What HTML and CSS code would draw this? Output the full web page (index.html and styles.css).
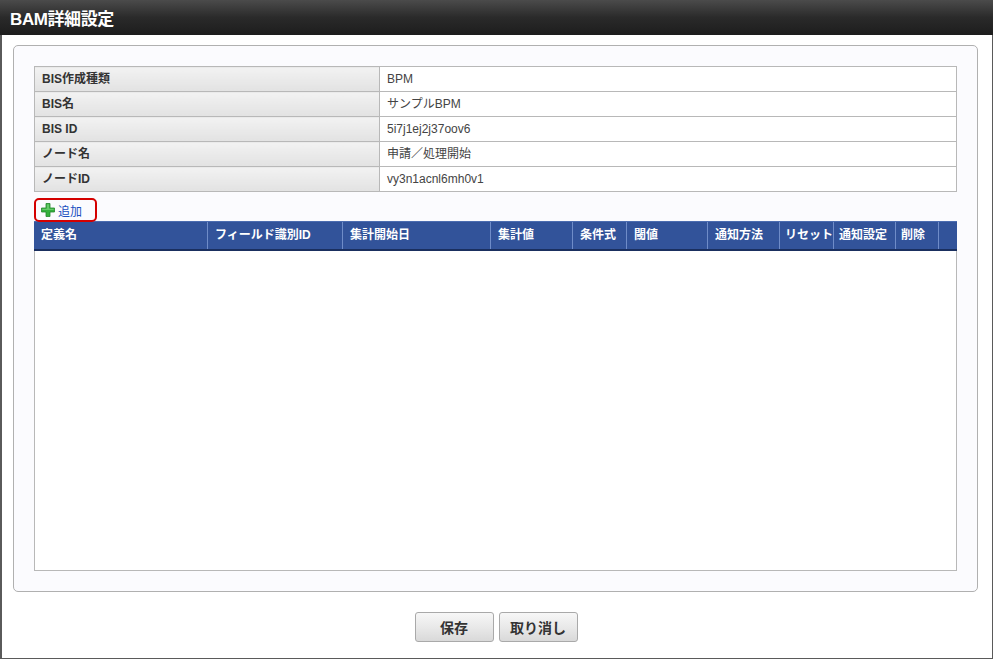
FILE: index.html
```html
<!DOCTYPE html>
<html lang="ja">
<head>
<meta charset="utf-8">
<title>BAM詳細設定</title>
<link rel="stylesheet" href="styles.css">
</head>
<body>
<div class="window">
  <div class="titlebar"><h1 class="title">BAM詳細設定</h1></div>
  <div class="content">
    <div class="panel">
      <table class="info">
        <tr><th>BIS作成種類</th><td>BPM</td></tr>
        <tr><th>BIS名</th><td>サンプルBPM</td></tr>
        <tr><th>BIS ID</th><td>5i7j1ej2j37oov6</td></tr>
        <tr><th>ノード名</th><td>申請／処理開始</td></tr>
        <tr><th>ノードID</th><td>vy3n1acnl6mh0v1</td></tr>
      </table>
      <div class="addrow">
        <a class="addlink" href="#">
          <svg class="plus" width="14" height="14" viewBox="0 0 14 14">
            <path d="M5 0.5h4v4.5h4.5v4h-4.5v4.5h-4v-4.5h-4.5v-4h4.5z" fill="#33b03c" stroke="#24862c" stroke-width="0.8"/>
            <path d="M5.8 1.3h2.4v4.5h4.5v1.2h-4.5h-2.4h-4.5v-1.2h4.5z" fill="#8ee08e" opacity="0.55"/>
          </svg>
          <span>追加</span>
        </a>
      </div>
      <div class="grid">
        <div class="grid-head">
          <div class="col c1">定義名</div>
          <div class="col c2">フィールド識別ID</div>
          <div class="col c3">集計開始日</div>
          <div class="col c4">集計値</div>
          <div class="col c5">条件式</div>
          <div class="col c6">閾値</div>
          <div class="col c7">通知方法</div>
          <div class="col c8">リセット</div>
          <div class="col c9">通知設定</div>
          <div class="col c10">削除</div>
          <div class="col c11"></div>
        </div>
        <div class="grid-body"></div>
      </div>
    </div>
    <div class="buttons">
      <button class="btn" type="button">保存</button>
      <button class="btn" type="button">取り消し</button>
    </div>
  </div>
</div>
</body>
</html>
```
FILE: styles.css
```css
html, body {
  margin: 0;
  padding: 0;
  background: #fff;
}
body {
  font-family: "Liberation Sans", Arial, "Noto Sans CJK JP", sans-serif;
  font-size: 12px;
  color: #333;
}
.window {
  width: 993px;
  height: 659px;
  box-sizing: border-box;
  border: 1px solid #5a5a5a;
  border-left-width: 2px;
  border-top: none;
  background: #fff;
}
.titlebar {
  height: 35px;
  background: linear-gradient(#4b4b4b, #2a2a2a 50%, #1d1d1d);
  display: flex;
  align-items: center;
  padding-left: 10px;
  margin-left: -2px;
  margin-right: -1px;
}
.title {
  margin: 0;
  font-size: 17px;
  font-weight: bold;
  color: #fff;
  letter-spacing: -0.4px;
}
.content {
  padding: 10px 14px 0 11px;
}
.panel {
  height: 547px;
  box-sizing: border-box;
  border: 1px solid #b0b0b0;
  border-radius: 5px;
  background: #fbfbfe;
  padding: 20px;
  display: flex;
  flex-direction: column;
}
.info {
  width: 100%;
  border-collapse: collapse;
  table-layout: fixed;
}
.info th, .info td {
  height: 24px;
  padding: 0 0 0 7px;
  border: 1px solid #b8b8b8;
  text-align: left;
  font-size: 12px;
  line-height: 14px;
}
.info th {
  width: 337px;
  font-weight: bold;
  color: #333;
  background: linear-gradient(#f2f2f2, #e2e2e2);
}
.info td {
  background: #fff;
  color: #444;
}
.addrow {
  height: 29px;
  flex: none;
}
.addlink {
  display: inline-flex;
  align-items: center;
  gap: 3px;
  box-sizing: border-box;
  height: 24px;
  width: 63px;
  margin-top: 6px;
  padding: 0 0 0 5px;
  border: 2px solid #d40000;
  border-radius: 5px;
  color: #1a4fc0;
  text-decoration: none;
  font-size: 12px;
  position: relative;
  z-index: 1;
}
.addlink .plus {
  display: block;
}
.grid {
  flex: 1;
  display: flex;
  flex-direction: column;
  border: 1px solid #b8b8b8;
  border-top: none;
  background: #fff;
}
.grid-head {
  height: 27px;
  display: flex;
  background: #32539a;
  border-top: 1px solid #4b6cb0;
  border-bottom: 2px solid #1a2f5f;
  margin: 0 -1px;
}
.col {
  box-sizing: border-box;
  border-right: 1px solid #6f8cc8;
  color: #fff;
  font-weight: bold;
  font-size: 12px;
  line-height: 27px;
  padding-left: 7px;
  white-space: nowrap;
  overflow: hidden;
}
.c1 { width: 174px; }
.c2 { width: 135px; }
.c3 { width: 148px; }
.c4 { width: 82px; }
.c5 { width: 54px; }
.c6 { width: 81px; }
.c7 { width: 72px; }
.c8 { width: 54px; padding-left: 5px; }
.c9 { width: 62px; padding-left: 5px; }
.c10 { width: 43px; padding-left: 5px; }
.c11 { flex: 1; border-right: none; }
.grid-body {
  flex: 1;
}
.buttons {
  display: flex;
  justify-content: center;
  gap: 5px;
  padding-top: 20px;
  padding-left: 1px;
}
.btn {
  width: 79px;
  height: 30px;
  box-sizing: border-box;
  border: 1px solid #a9a9a9;
  border-radius: 3px;
  background: linear-gradient(#f7f7f7, #e9e9e9 50%, #d9d9d9);
  font-family: "Liberation Sans", Arial, "Noto Sans CJK JP", sans-serif;
  font-size: 14px;
  font-weight: bold;
  color: #333;
  padding: 0;
}
```
